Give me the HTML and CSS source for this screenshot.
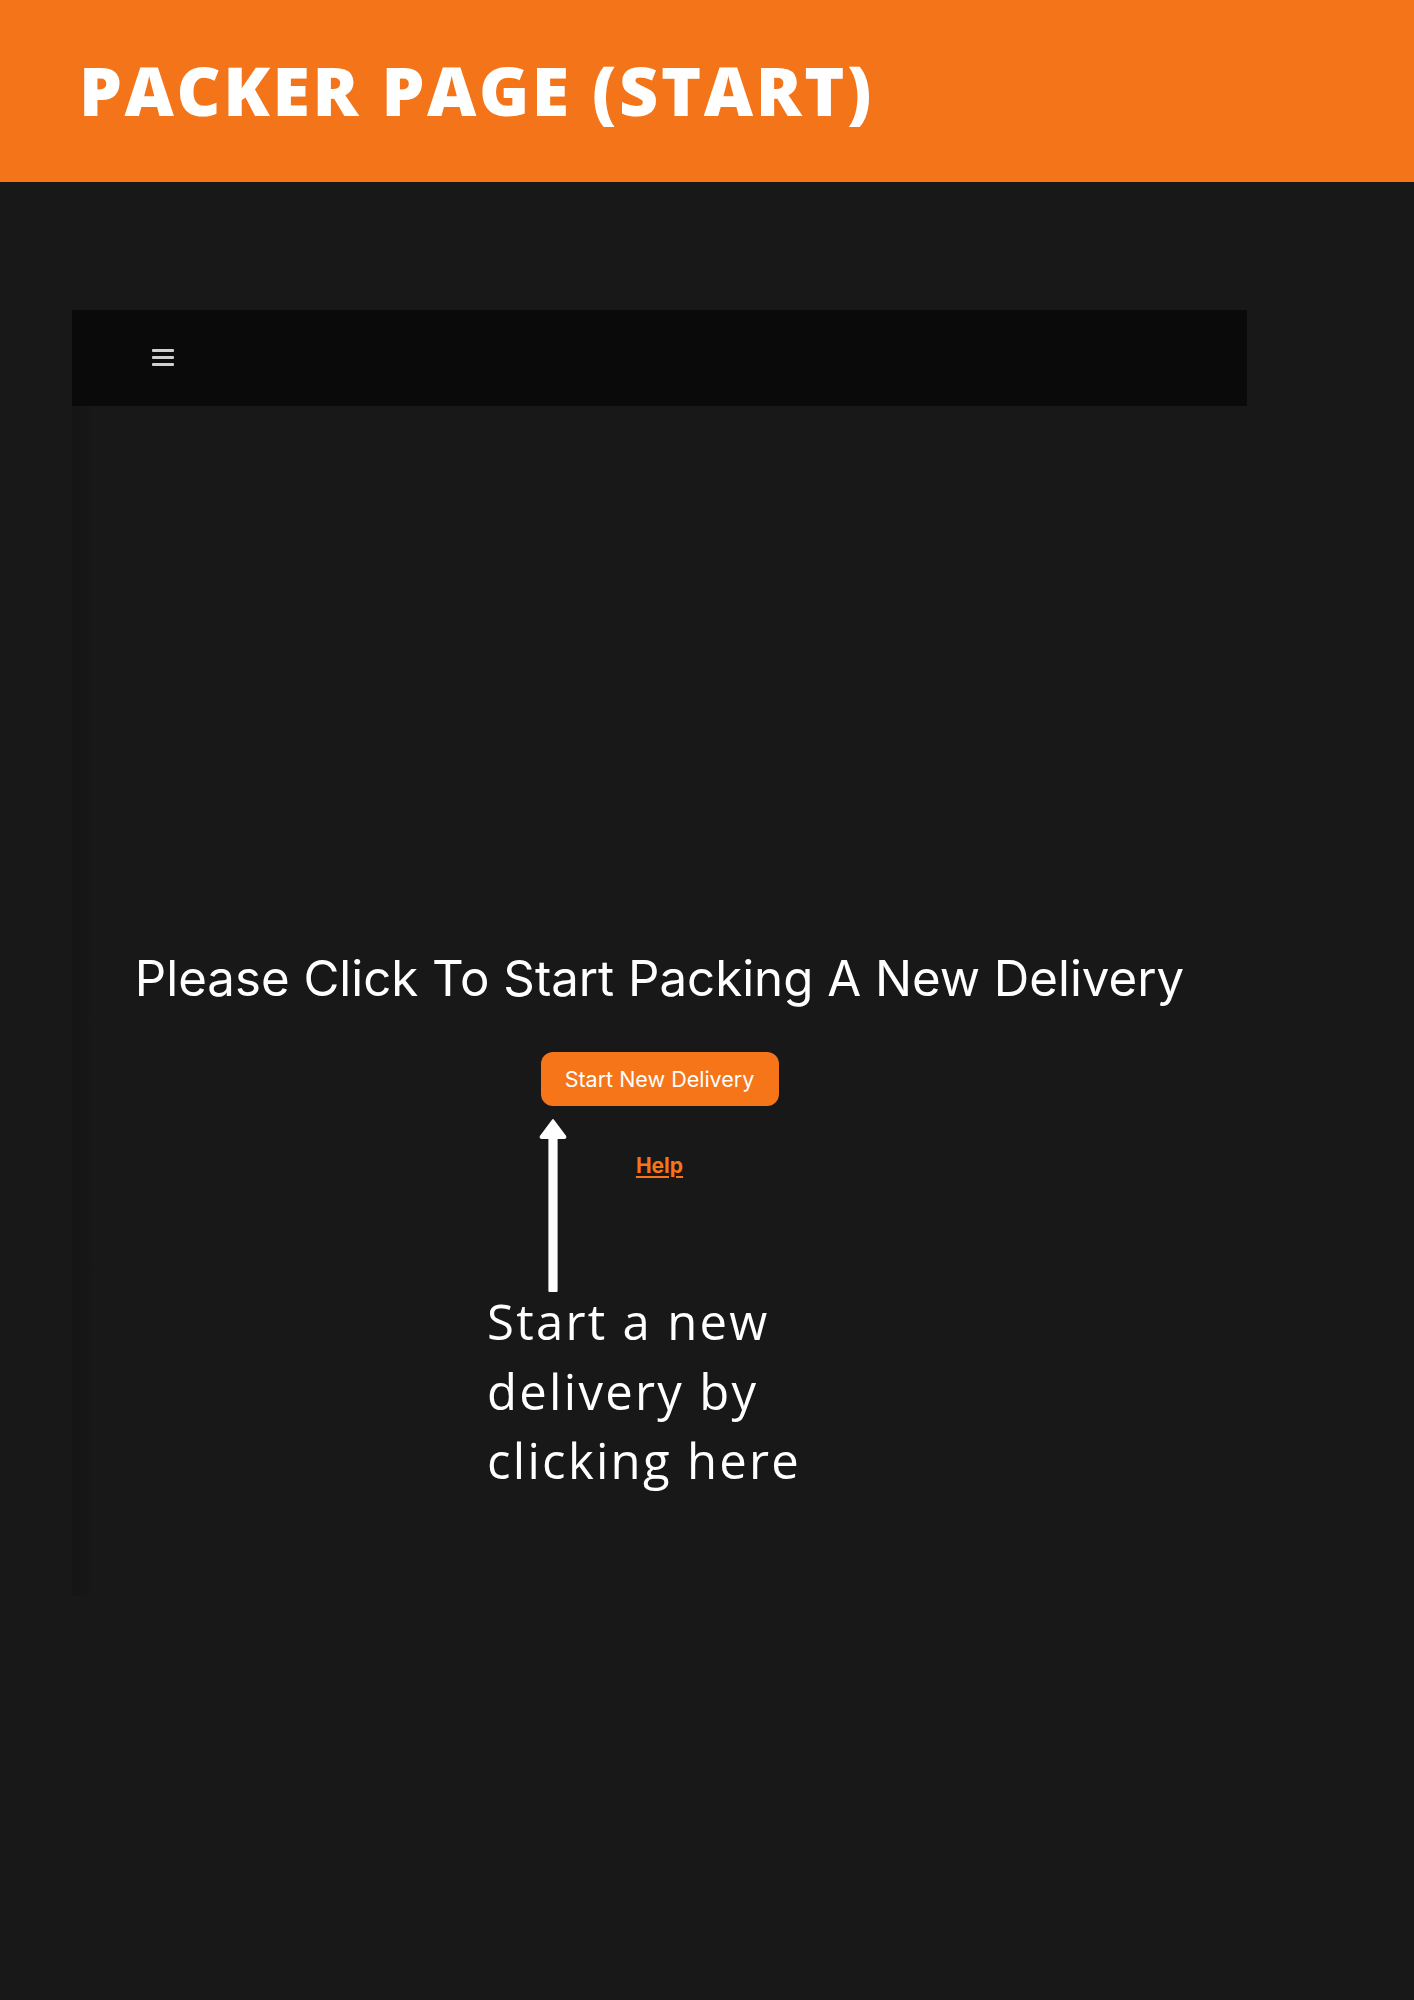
FILE: index.html
```html
<!DOCTYPE html>
<html lang="en">
<head>
<meta charset="utf-8">
<title>Packer Page (Start)</title>
<link rel="stylesheet" href="styles.css">
</head>
<body>
<header class="banner">
  <h1 class="banner-title">PACKER PAGE (START)</h1>
</header>
<main class="stage">
  <div class="app">
    <nav class="topbar">
      <span class="burger" aria-label="Menu">
        <span class="burger-line"></span>
        <span class="burger-line"></span>
        <span class="burger-line"></span>
      </span>
    </nav>
    <div class="app-body">
      <div class="side-shade"></div>
      <section class="start">
        <h2 class="start-title">Please Click To Start Packing A New Delivery</h2>
        <button class="start-btn" type="button">Start New Delivery</button>
        <a class="help-link" href="#">Help</a>
      </section>
    </div>
  </div>
  <div class="callout">
    <svg class="callout-arrow" width="30" height="175" viewBox="0 0 30 175" aria-hidden="true">
      <path d="M15 3 L27 19 Q28 21 26 21 L18.6 21 L18.6 174 L11.4 174 L11.4 21 L4 21 Q2 21 3 19 Z" fill="#ffffff" stroke="#ffffff" stroke-width="2" stroke-linejoin="round"/>
    </svg>
    <p class="callout-text">Start a new<br>delivery by<br>clicking here</p>
  </div>
</main>
</body>
</html>
```

FILE: styles.css
```css
html, body {
  margin: 0;
  padding: 0;
}

body {
  background: #181818;
  min-height: 2000px;
  font-family: Inter, "Liberation Sans", sans-serif;
}

.banner {
  background: #f47419;
  height: 182px;
  box-sizing: border-box;
  padding: 56px 0 0 79px;
}

.banner-title {
  margin: 0;
  font-family: "Open Sans", sans-serif;
  font-weight: 800;
  font-size: 68px;
  line-height: 1;
  letter-spacing: 2.6px;
  color: #ffffff;
}

.stage {
  position: relative;
  padding: 128px 0 0 72px;
}

.app {
  width: 1175px;
}

.topbar {
  background: #0a0a0a;
  height: 96px;
  display: flex;
  align-items: center;
  padding-left: 80px;
}

.burger {
  display: flex;
  flex-direction: column;
  gap: 4px;
  width: 22px;
  margin-top: -2px;
}

.burger-line {
  display: block;
  height: 3px;
  border-radius: 1px;
  background: #cfcfcf;
}

.app-body {
  position: relative;
  height: 1190px;
}

.side-shade {
  position: absolute;
  left: 0;
  top: 0;
  bottom: 0;
  width: 24px;
  background: linear-gradient(to right, #151515, #171717 70%, #181818);
}

.start {
  display: flex;
  flex-direction: column;
  align-items: center;
  padding-top: 543px;
}

.start-title {
  margin: 0;
  font-family: Inter, sans-serif;
  font-weight: 400;
  font-size: 49.2px;
  line-height: 59px;
  color: #ffffff;
}

.start-btn {
  margin-top: 44px;
  width: 238px;
  height: 54px;
  border: none;
  border-radius: 12px;
  background: #f57518;
  color: #ffffff;
  font-family: Inter, sans-serif;
  font-size: 21.5px;
  font-weight: 400;
  padding: 0;
}

.help-link {
  margin-top: 47px;
  font-family: Inter, sans-serif;
  font-weight: 700;
  font-size: 21px;
  line-height: 25px;
  color: #f57518;
  text-decoration: underline;
  text-underline-offset: 3px;
  text-decoration-thickness: 2px;
}

.callout {
  position: absolute;
  left: 487px;
  top: 935px;
}

.callout-arrow {
  display: block;
  margin-left: 51px;
}

.callout-text {
  margin: -5px 0 0;
  font-family: "Open Sans", sans-serif;
  font-size: 49px;
  line-height: 69.5px;
  letter-spacing: 2.3px;
  color: #ffffff;
}
```
